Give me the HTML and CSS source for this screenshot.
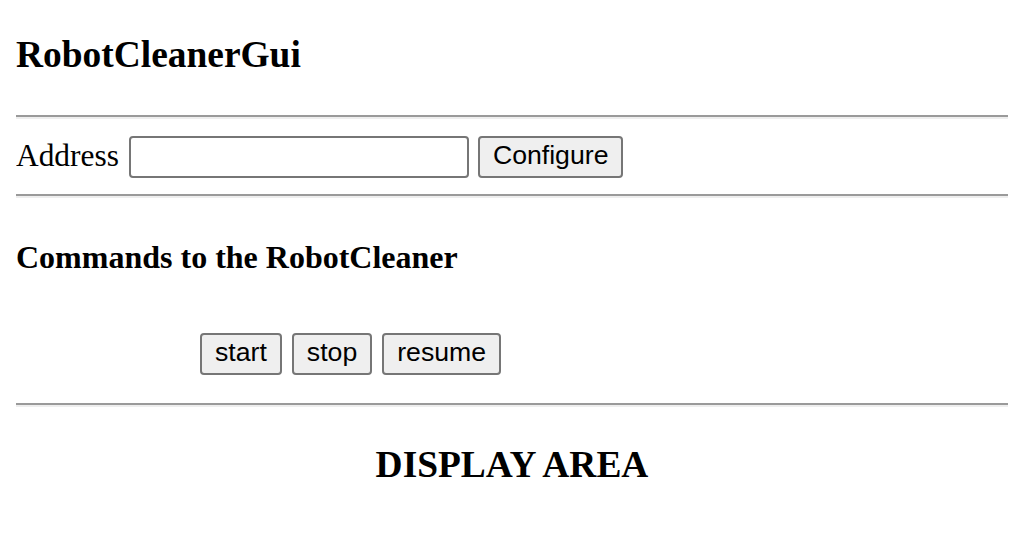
FILE: index.html
```html
<!DOCTYPE html>
<html>
<head>
<meta charset="utf-8">
<title>RobotCleanerGui</title>
<link rel="stylesheet" href="styles.css">
</head>
<body>
<h3 class="title">RobotCleanerGui</h3>
<hr class="rule rule-first">
<div class="address-row">
  <span class="label">Address</span>
  <input class="address-input" type="text">
  <button class="btn">Configure</button>
</div>
<hr class="rule rule-second">
<h4 class="subtitle">Commands to the RobotCleaner</h4>
<div class="commands">
  <button class="btn">start</button>
  <button class="btn">stop</button>
  <button class="btn">resume</button>
</div>
<hr class="rule rule-third">
<h3 class="display">DISPLAY AREA</h3>
</body>
</html>
```
FILE: styles.css
```css
html, body {
  background: #ffffff;
}
body {
  margin: 0 7px 0 16px;
  padding: 0;
  font-family: "Liberation Serif", "Times New Roman", serif;
  color: #000;
}
.title {
  font-size: 37.44px;
  font-weight: bold;
  line-height: 43px;
  margin: 33px 0 0;
}
.rule {
  display: block;
  height: 0;
  border: 0;
  border-top: 2px solid #9a9a9a;
  border-bottom: 2px solid #eeeeee;
  margin: 0;
}
.rule-first { margin-top: 39px; }
.rule-second { margin-top: 16px; }
.rule-third { margin-top: 28px; }
.address-row {
  display: flex;
  align-items: flex-start;
  margin-top: 17px;
}
.label {
  font-size: 31.4px;
  line-height: 40px;
  margin-right: 10px;
}
.address-input {
  box-sizing: border-box;
  width: 340px;
  height: 42px;
  margin: 0 9px 0 0;
  border: 2px solid #767676;
  border-radius: 4px;
  background: #fff;
  padding: 0 4px;
  font-family: "Liberation Sans", Arial, sans-serif;
  font-size: 26.67px;
}
.btn {
  box-sizing: border-box;
  height: 42px;
  margin: 0;
  padding: 0 13px 3px;
  border: 2px solid #767676;
  border-radius: 4px;
  background: #efefef;
  color: #000;
  font-family: "Liberation Sans", Arial, sans-serif;
  font-size: 26.67px;
}
.subtitle {
  font-size: 32px;
  font-weight: bold;
  line-height: 37px;
  margin: 41px 0 0;
}
.commands {
  display: flex;
  gap: 10px;
  padding-left: 184px;
  margin-top: 57px;
}
.display {
  font-size: 37.44px;
  font-weight: bold;
  line-height: 43px;
  text-align: center;
  margin: 36px 0 0;
}
```
